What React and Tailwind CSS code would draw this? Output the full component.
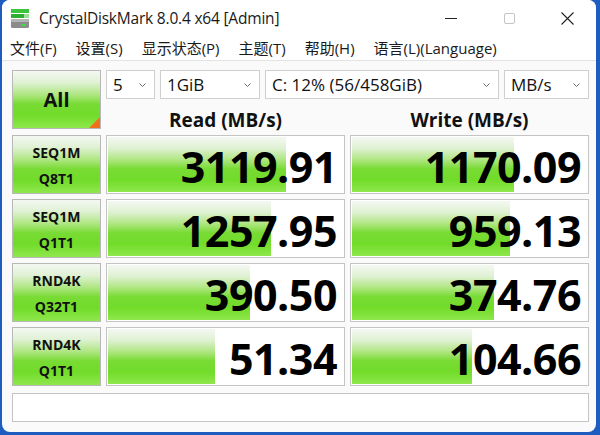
import React from 'react';

const FONT = { fontFamily: '"Open Sans", "Noto Sans CJK SC", sans-serif' };

const rows = [
  { a: 'SEQ1M', b: 'Q8T1', read: '3119.91', readW: 178, write: '1170.09', writeW: 162 },
  { a: 'SEQ1M', b: 'Q1T1', read: '1257.95', readW: 163, write: '959.13', writeW: 158 },
  { a: 'RND4K', b: 'Q32T1', read: '390.50', readW: 142, write: '374.76', writeW: 142 },
  { a: 'RND4K', b: 'Q1T1', read: '51.34', readW: 107, write: '104.66', writeW: 120 },
];

const barBg =
  'bg-[linear-gradient(to_bottom,#f4f8f2_0%,#e0f1d4_20%,#ade67f_42%,#78db34_58%,#72dc2a_78%,#8fe74c_100%)]';

function AppIcon() {
  return (
    <svg width="22" height="22" viewBox="0 0 22 22">
      <rect x="2" y="1" width="18" height="4" fill="#3cc43c" />
      <rect x="2" y="6" width="13" height="4" fill="#2fae2f" />
      <rect x="15" y="6" width="5" height="4" fill="#9adf9a" />
      <rect x="2" y="11" width="18" height="9" rx="1.5" fill="#8c8c8c" />
      <rect x="2" y="11" width="18" height="3" rx="1" fill="#b4b4b4" />
      <rect x="12" y="16" width="5" height="2" fill="#3cdc3c" />
    </svg>
  );
}

function Chevron() {
  return (
    <svg width="7" height="4" viewBox="0 0 7 4" className="shrink-0">
      <path d="M0.5 0.5 L3.5 3.5 L6.5 0.5" fill="none" stroke="#6b6b6b" strokeWidth="1" />
    </svg>
  );
}

function Select({ value, w }) {
  return (
    <div className={`${w} h-[29px] bg-white border border-[#cfcfcf] flex items-center justify-between pl-[6px] pr-[8px]`}>
      <span className="text-[17px] text-[#111] leading-none">{value}</span>
      <Chevron />
    </div>
  );
}

function Label({ a, b }) {
  return (
    <div className={`h-[59px] border border-[#b8b8b8] ${barBg} flex flex-col items-center justify-center gap-[12px] pt-[2px] font-bold text-[14px] leading-none text-[#111]`}>
      <span>{a}</span>
      <span>{b}</span>
    </div>
  );
}

function Cell({ value, width }) {
  return (
    <div className="relative h-[59px] border border-[#c4c4c4] bg-white p-px">
      <div className={`h-full ${barBg}`} style={{ width }} />
      <div className="absolute inset-0 flex items-center justify-end pr-[7px] pt-[3px]">
        <span className="text-[43px] font-bold leading-none tracking-[-0.5px] text-black">{value}</span>
      </div>
    </div>
  );
}

export default function App() {
  return (
    <div className="w-[600px] h-[435px] bg-[#1f5cbf] pl-[2px] pr-[4px] pb-[3px]" style={FONT}>
      <div className="h-full bg-[#fafafa] rounded-[8px] overflow-hidden flex flex-col">
        {/* title bar */}
        <div className="h-[37px] bg-white flex items-center shrink-0">
          <div className="ml-[7px] mr-[8px] mt-[1px]">
            <AppIcon />
          </div>
          <span className="text-[15.5px] text-[#1a1a1a] tracking-[-0.2px]">CrystalDiskMark 8.0.4 x64 [Admin]</span>
          <div className="ml-auto flex items-center h-full">
            <div className="w-[58px] h-full flex items-center justify-center">
              <div className="w-[12px] h-px bg-[#222]" />
            </div>
            <div className="w-[58px] h-full flex items-center justify-center">
              <div className="w-[11px] h-[11px] border border-[#c4c4c4] rounded-[2px]" />
            </div>
            <div className="w-[58px] h-full flex items-center justify-center">
              <svg width="13" height="13" viewBox="0 0 13 13">
                <path d="M0.5 0.5 L12.5 12.5 M12.5 0.5 L0.5 12.5" stroke="#222" strokeWidth="1.1" />
              </svg>
            </div>
          </div>
        </div>

        {/* menu */}
        <div className="h-[24px] bg-white flex items-center pl-[8px] gap-[19px] text-[15px] text-[#1a1a1a] shrink-0 border-b border-[#e3e3e3]">
          <span>文件(F)</span>
          <span>设置(S)</span>
          <span>显示状态(P)</span>
          <span>主题(T)</span>
          <span>帮助(H)</span>
          <span>语言(L)(Language)</span>
        </div>

        {/* main grid */}
        <div className="pl-[10px] pt-[9px]">
          <div className="grid grid-cols-[89px_239px_239px] grid-rows-[60px_59px_59px_59px_59px] gap-x-[5px] gap-y-[5px]">
            <div className={`relative h-[59px] border border-[#b8b8b8] ${barBg} flex items-center justify-center`}>
              <span className="text-[20px] font-bold text-[#111]">All</span>
              <div className="absolute right-0 bottom-0 w-0 h-0 border-l-[11px] border-l-transparent border-b-[11px] border-b-[#f26f1c]" />
            </div>
            <div className="col-span-2 flex flex-col">
              <div className="flex gap-[5px]">
                <Select value="5" w="w-[49px]" />
                <Select value="1GiB" w="w-[100px]" />
                <Select value="C: 12% (56/458GiB)" w="w-[234px]" />
                <Select value="MB/s" w="w-[85px]" />
              </div>
              <div className="grid grid-cols-2 gap-x-[5px] flex-1 items-start pt-[12px]">
                <span className="text-center text-[19px] leading-none font-bold text-[#111]">Read (MB/s)</span>
                <span className="text-center text-[19px] leading-none font-bold text-[#111]">Write (MB/s)</span>
              </div>
            </div>
            {rows.map((r, i) => (
              <React.Fragment key={i}>
                <Label a={r.a} b={r.b} />
                <Cell value={r.read} width={r.readW} />
                <Cell value={r.write} width={r.writeW} />
              </React.Fragment>
            ))}
          </div>
          <div className="mt-[7px] w-[577px] h-[29px] bg-white border border-[#c4c4c4]" />
        </div>
      </div>
    </div>
  );
}
